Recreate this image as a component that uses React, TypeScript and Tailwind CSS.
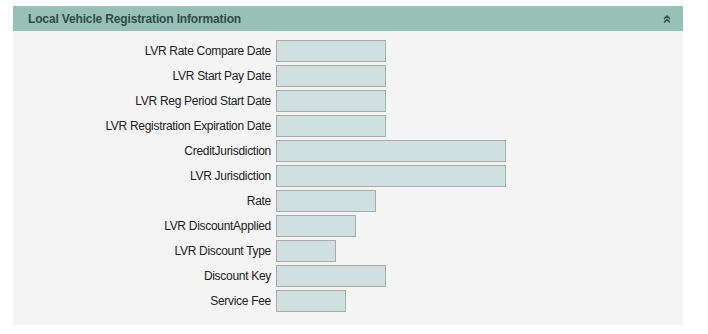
import { ChevronsUp } from 'lucide-react';

const fields = [
  { label: 'LVR Rate Compare Date', w: 'w-[110px]' },
  { label: 'LVR Start Pay Date', w: 'w-[110px]' },
  { label: 'LVR Reg Period Start Date', w: 'w-[110px]' },
  { label: 'LVR Registration Expiration Date', w: 'w-[110px]' },
  { label: 'CreditJurisdiction', w: 'w-[230px]' },
  { label: 'LVR Jurisdiction', w: 'w-[230px]' },
  { label: 'Rate', w: 'w-[100px]' },
  { label: 'LVR DiscountApplied', w: 'w-[80px]' },
  { label: 'LVR Discount Type', w: 'w-[60px]' },
  { label: 'Discount Key', w: 'w-[110px]' },
  { label: 'Service Fee', w: 'w-[70px]' },
];

export default function App() {
  return (
    <div className="w-[708px] h-[334px] bg-white pt-[6px] pl-[13px] font-['Liberation_Sans',sans-serif]">
      <div className="w-[670px]">
        <div className="h-[25px] bg-[#97c1b5] flex items-center justify-between pl-[15px] pr-[10px]">
          <span className="text-[12px] font-bold tracking-[-0.15px] text-[#2f4d48]">
            Local Vehicle Registration Information
          </span>
          <ChevronsUp className="size-3 text-[#2f4d48]" strokeWidth={3} />
        </div>
        <div className="bg-[#f4f4f4] pt-[9px] pb-[13px] flex flex-col gap-[3px]">
          {fields.map((f) => (
            <div key={f.label} className="flex items-center h-[22px]">
              <span className="w-[263px] text-right pr-[5px] text-[12px] tracking-[-0.3px] text-[#222] whitespace-nowrap">
                {f.label}
              </span>
              <div
                className={`${f.w} h-[22px] bg-[#d0e0e0] border border-[#a9aaab]`}
              />
            </div>
          ))}
        </div>
      </div>
    </div>
  );
}
